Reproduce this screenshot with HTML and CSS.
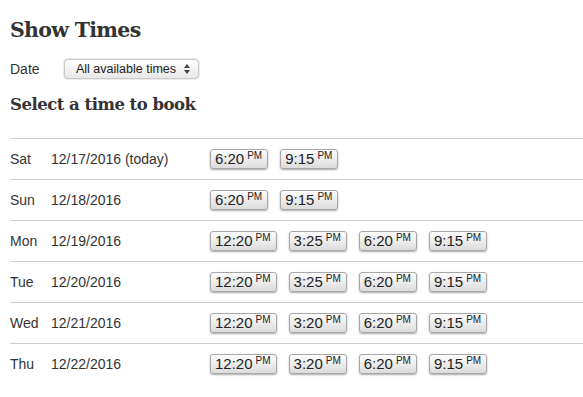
FILE: index.html
```html
<!DOCTYPE html>
<html lang="en">
<head>
    <meta charset="UTF-8">
    <meta name="viewport" content="width=device-width, initial-scale=1.0">
    <title>Show Times</title>
    <link rel="stylesheet" href="styles.css">
</head>
<body>
    <h1>Show Times</h1>

    <div class="date-filter">
        <label for="date-select">Date</label>
        <select id="date-select">
            <option>All available times</option>
        </select>
    </div>

    <h2>Select a time to book</h2>

    <div class="showtimes">
        <div class="day-row">
            <span class="day">Sat</span>
            <span class="date">12/17/2016 (today)</span>
            <div class="times">
                <button class="time">6:20<sup>PM</sup></button>
                <button class="time">9:15<sup>PM</sup></button>
            </div>
        </div>
        <div class="day-row">
            <span class="day">Sun</span>
            <span class="date">12/18/2016</span>
            <div class="times">
                <button class="time">6:20<sup>PM</sup></button>
                <button class="time">9:15<sup>PM</sup></button>
            </div>
        </div>
        <div class="day-row">
            <span class="day">Mon</span>
            <span class="date">12/19/2016</span>
            <div class="times">
                <button class="time">12:20<sup>PM</sup></button>
                <button class="time">3:25<sup>PM</sup></button>
                <button class="time">6:20<sup>PM</sup></button>
                <button class="time">9:15<sup>PM</sup></button>
            </div>
        </div>
        <div class="day-row">
            <span class="day">Tue</span>
            <span class="date">12/20/2016</span>
            <div class="times">
                <button class="time">12:20<sup>PM</sup></button>
                <button class="time">3:25<sup>PM</sup></button>
                <button class="time">6:20<sup>PM</sup></button>
                <button class="time">9:15<sup>PM</sup></button>
            </div>
        </div>
        <div class="day-row">
            <span class="day">Wed</span>
            <span class="date">12/21/2016</span>
            <div class="times">
                <button class="time">12:20<sup>PM</sup></button>
                <button class="time">3:20<sup>PM</sup></button>
                <button class="time">6:20<sup>PM</sup></button>
                <button class="time">9:15<sup>PM</sup></button>
            </div>
        </div>
        <div class="day-row">
            <span class="day">Thu</span>
            <span class="date">12/22/2016</span>
            <div class="times">
                <button class="time">12:20<sup>PM</sup></button>
                <button class="time">3:20<sup>PM</sup></button>
                <button class="time">6:20<sup>PM</sup></button>
                <button class="time">9:15<sup>PM</sup></button>
            </div>
        </div>
    </div>
</body>
</html>
```

FILE: styles.css
```css
body {
    font-family: "Liberation Sans", Arial, sans-serif;
    font-size: 14px;
    color: #333;
    margin: 0;
    padding: 0 0 0 10px;
    background: #fff;
}
h1, h2 {
    font-family: "DejaVu Serif", serif;
    font-weight: bold;
    color: #333;
    margin: 0;
}
h1 {
    font-size: 20.5px;
    letter-spacing: -0.7px;
    line-height: 30px;
    padding-top: 15px;
}
h2 {
    font-size: 16.5px;
    letter-spacing: -0.5px;
    line-height: 24px;
    margin-top: 14px;
}
.date-filter {
    display: flex;
    align-items: center;
    margin-top: 14px;
}
.date-filter label {
    width: 54px;
}
.date-filter select {
    appearance: none;
    -webkit-appearance: none;
    width: 135px;
    height: 20px;
    padding: 0 0 0 11px;
    font-family: "Liberation Sans", Arial, sans-serif;
    font-size: 12.5px;
    color: #222;
    border: 1px solid #c8c8c8;
    border-radius: 4px;
    background-color: #f4f4f4;
    background-image: url("data:image/svg+xml,%3Csvg xmlns='http://www.w3.org/2000/svg' width='6' height='10'%3E%3Cpath d='M3 0L6 4H0z M3 10L0 6h6z' fill='%23444'/%3E%3C/svg%3E"), linear-gradient(#fff, #e8e8e8);
    background-repeat: no-repeat;
    background-position: right 8px center, 0 0;
    box-shadow: 0 0 0 1px #ececec;
}
.showtimes {
    margin-top: 21px;
}
.day-row {
    display: flex;
    align-items: center;
    border-top: 1px solid #cfcfcf;
    height: 40px;
}
.day {
    width: 41px;
}
.date {
    width: 159px;
}
.times {
    display: flex;
    gap: 12px;
}
.time {
    font-family: "Liberation Sans", Arial, sans-serif;
    font-size: 15px;
    line-height: 16px;
    color: #222;
    padding: 1px 5px 1px 4px;
    border: 1px solid #a8a8a8;
    border-radius: 3px;
    background: linear-gradient(#fdfdfd, #dcdcdc);
    box-shadow: 0 1px 2px rgba(0, 0, 0, 0.35);
    cursor: pointer;
}
.time sup {
    font-size: 10px;
    margin-left: 3px;
    vertical-align: 5px;
    line-height: 0;
}
```
